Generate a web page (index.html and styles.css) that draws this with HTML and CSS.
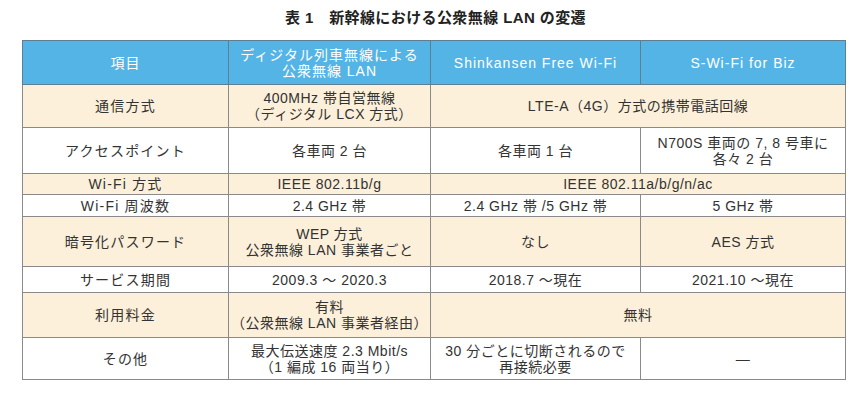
FILE: index.html
```html
<!DOCTYPE html>
<html lang="ja">
<head>
<meta charset="utf-8">
<link rel="stylesheet" href="styles.css">
</head>
<body>
<div class="page">
  <h1 class="title">表 1　新幹線における公衆無線 LAN の変遷</h1>
  <table class="tbl">
    <colgroup>
      <col class="c1"><col class="c2"><col class="c3"><col class="c4">
    </colgroup>
    <thead>
      <tr class="h-head">
        <th>項目</th>
        <th>ディジタル列車無線による<br>公衆無線 LAN</th>
        <th>Shinkansen Free Wi-Fi</th>
        <th>S-Wi-Fi for Biz</th>
      </tr>
    </thead>
    <tbody>
      <tr class="beige h43">
        <td class="item">通信方式</td>
        <td>400MHz 帯自営無線<br>（ディジタル LCX 方式）</td>
        <td colspan="2">LTE-A（4G）方式の携帯電話回線</td>
      </tr>
      <tr class="h46">
        <td class="item">アクセスポイント</td>
        <td>各車両 2 台</td>
        <td>各車両 1 台</td>
        <td>N700S 車両の 7, 8 号車に<br>各々 2 台</td>
      </tr>
      <tr class="beige h21">
        <td class="item">Wi-Fi 方式</td>
        <td>IEEE 802.11b/g</td>
        <td colspan="2">IEEE 802.11a/b/g/n/ac</td>
      </tr>
      <tr class="h22">
        <td class="item">Wi-Fi 周波数</td>
        <td>2.4 GHz 帯</td>
        <td>2.4 GHz 帯 /5 GHz 帯</td>
        <td>5 GHz 帯</td>
      </tr>
      <tr class="beige h50">
        <td class="item">暗号化パスワード</td>
        <td>WEP 方式<br>公衆無線 LAN 事業者ごと</td>
        <td>なし</td>
        <td>AES 方式</td>
      </tr>
      <tr class="h26">
        <td class="item">サービス期間</td>
        <td>2009.3 ～ 2020.3</td>
        <td>2018.7 ～現在</td>
        <td>2021.10 ～現在</td>
      </tr>
      <tr class="beige h45">
        <td class="item">利用料金</td>
        <td>有料<br>（公衆無線 LAN 事業者経由）</td>
        <td colspan="2">無料</td>
      </tr>
      <tr class="h42">
        <td class="item">その他</td>
        <td>最大伝送速度 2.3 Mbit/s<br>（1 編成 16 両当り）</td>
        <td>30 分ごとに切断されるので<br>再接続必要</td>
        <td>—</td>
      </tr>
    </tbody>
  </table>
</div>
</body>
</html>
```

FILE: styles.css
```css
html, body {
  margin: 0;
  padding: 0;
  background: #ffffff;
}

.page {
  width: 858px;
  padding: 9px 0 0 22px;
  box-sizing: border-box;
  font-family: "Liberation Sans", "Noto Sans CJK JP", sans-serif;
  color: #333333;
}

.title {
  margin: 0 0 13px 0;
  width: 823px;
  text-align: center;
  font-size: 15px;
  line-height: 18px;
  font-weight: bold;
  color: #222222;
  letter-spacing: 0.4px;
  padding-left: 4px;
  box-sizing: border-box;
}

.tbl {
  width: 823px;
  border-collapse: collapse;
  table-layout: fixed;
  font-size: 14px;
  line-height: 16px;
  letter-spacing: 0.5px;
}

.c1 { width: 206px; }
.c2 { width: 202px; }
.c3 { width: 210px; }
.c4 { width: 205px; }

.tbl th,
.tbl td {
  border: 1px solid #8a8a8a;
  padding: 0;
  text-align: center;
  vertical-align: middle;
  font-weight: normal;
}

.tbl th {
  background: #55b4e6;
  color: #ffffff;
  border-color: #5e7f92;
  letter-spacing: 1px;
}

.tbl td.item {
  letter-spacing: 1.2px;
}

.h-head { height: 44px; }
.h43 { height: 43px; }
.h46 { height: 46px; }
.h21 { height: 21px; }
.h22 { height: 22px; }
.h50 { height: 50px; }
.h26 { height: 26px; }
.h45 { height: 45px; }
.h42 { height: 42px; }

.beige td {
  background: #fdf0da;
}
```
